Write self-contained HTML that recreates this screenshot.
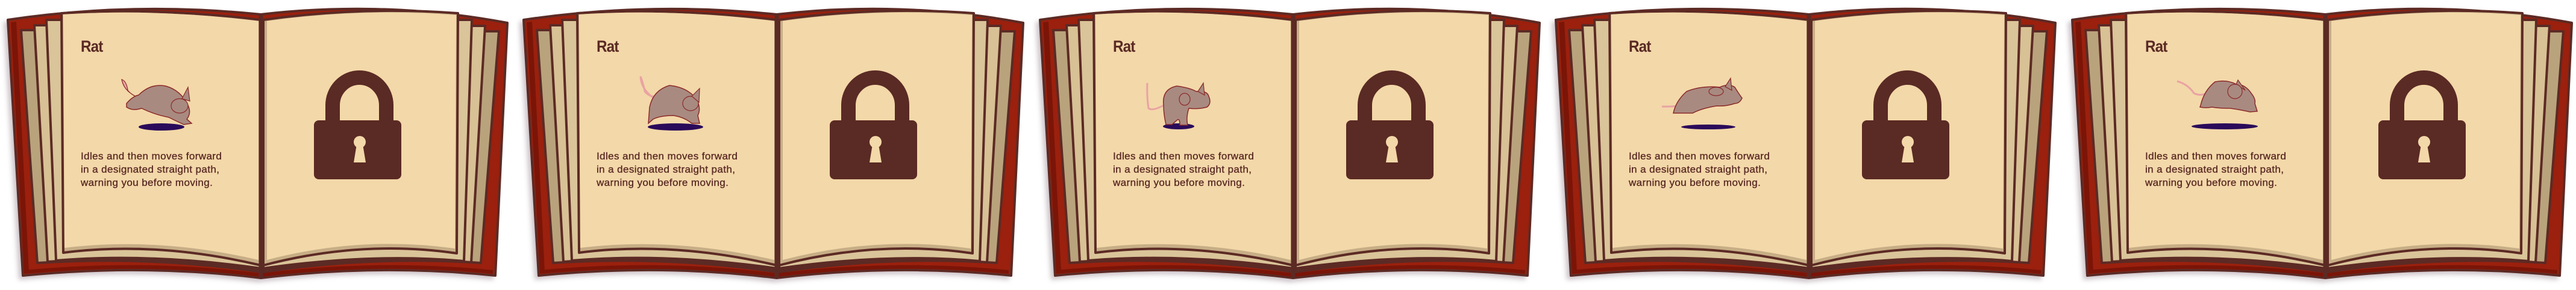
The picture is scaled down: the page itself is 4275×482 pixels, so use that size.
<!DOCTYPE html>
<html><head><meta charset="utf-8">
<style>
html,body{margin:0;padding:0;background:#fff;}
body{width:4275px;height:482px;position:relative;overflow:hidden;}
.p{position:absolute;top:0;width:856px;height:482px;}
.p svg{position:absolute;left:0;top:0;}
.t{position:absolute;left:134px;top:62px;font:bold 27px "Liberation Sans",sans-serif;color:#5a2a24;letter-spacing:-1px;transform:scaleX(0.9);transform-origin:left;}
.d{position:absolute;left:134px;top:249px;font:17px/22px "Liberation Sans",sans-serif;color:#5a2a24;letter-spacing:0.4px;white-space:nowrap;-webkit-text-stroke:0.35px #5a2a24;}
</style></head><body>

<svg width="0" height="0" style="position:absolute">
<defs>
<g id="book">
 <g style="filter:drop-shadow(-5px 5px 4px rgba(90,60,75,.3))">
  <path d="M13,33 Q220,2 433,24 L433,462 Q240,438 38,458 Z" fill="#9b200d" stroke="#5c2a24" stroke-width="4" stroke-linejoin="round"/>
  <path d="M433,24 Q640,0 842,38 L822,458 Q630,438 433,462 Z" fill="#9b200d" stroke="#5c2a24" stroke-width="4" stroke-linejoin="round"/>
 </g>
 <polygon points="18,37 27,36 48,452 40,454" fill="#7a1508"/>
 <path d="M40,452 Q240,433 431,457" fill="none" stroke="#7a1508" stroke-width="6"/>
 <path d="M435,457 Q630,433 818,452" fill="none" stroke="#7a1508" stroke-width="6"/>
 <g stroke="#5c2a24" stroke-width="4" stroke-linejoin="round">
  <path d="M35,50 L433,50 L433,452 Q250,425 62,437 Z" fill="#b9a37c"/>
  <path d="M57,42 L433,42 L433,448 Q250,423 79,435 Z" fill="#d8c195"/>
  <path d="M77,33 L433,33 L433,446 Q250,420 93,433 Z" fill="#dac499"/>
  <path d="M828,52 L437,52 L437,452 Q620,425 798,437 Z" fill="#b9a37c"/>
  <path d="M805,43 L437,43 L437,448 Q620,423 782,436 Z" fill="#d8c195"/>
  <path d="M783,33 L437,33 L437,446 Q620,420 770,434 Z" fill="#dac499"/>
  <path d="M102,22 Q260,12 433,33 L433,441 Q260,400 105,420 Z" fill="#c7ae86"/>
  <path d="M437,33 Q600,10 760,22 L758,421 Q600,398 437,441 Z" fill="#c7ae86"/>
 </g>
 <path d="M105,24 Q260,14 429,35 L429,432 Q260,393 107,412 Z" fill="#f3d8a9"/>
 <path d="M443,35 Q600,13 757,25 L755,413 Q600,391 443,432 Z" fill="#f3d8a9"/>
 <path d="M433,24 L433,462" stroke="#5c2a24" stroke-width="7"/>
 <path d="M552,208 V175 A44.5,46 0 0 1 641,175 V208" fill="none" stroke="#5a2a24" stroke-width="24"/>
 <rect x="521" y="200" width="145" height="98" rx="8" fill="#5a2a24"/>
 <circle cx="597" cy="236" r="10" fill="#f3d8a9"/>
 <path d="M592,240 L587,270 L607,270 L602,240 Z" fill="#f3d8a9"/>
</g>
</defs>
</svg>

<div class="p" style="left:0px">
<svg width="856" height="482"><use href="#book"/>
 <ellipse cx="268" cy="211" rx="38" ry="6" fill="#2a0a5a"/>
 <path d="M225,160 Q205,150 202,132 Q210,135 212,150 Q220,160 232,162" fill="#e9a3a3" stroke="#8a2a2a" stroke-width="1.2"/>
 <path d="M210,172 Q220,160 230,158 Q250,138 275,143 Q300,150 312,175 Q318,188 310,198 L318,205 L305,207 Q290,200 280,195 Q255,190 235,180 Q220,185 210,178 Z" fill="#a98a80" stroke="#8a2a2a" stroke-width="1.5"/>
 <ellipse cx="298" cy="176" rx="14" ry="12" fill="#a98a80" stroke="#8a2a2a" stroke-width="1.2"/>
 <path d="M302,164 L312,145 L315,168 Z" fill="#a98a80" stroke="#8a2a2a" stroke-width="1.2"/>
</svg>
<div class="t">Rat</div>
<div class="d">Idles and then moves forward<br>in a designated straight path,<br>warning you before moving.</div>
</div>

<div class="p" style="left:856px">
<svg width="856" height="482"><use href="#book"/>
 <ellipse cx="265" cy="211" rx="46" ry="6" fill="#2a0a5a"/>
 <path d="M232,165 Q208,150 207,127 Q212,140 214,152 Q222,162 234,160" fill="none" stroke="#e9a3a3" stroke-width="3"/>
 <path d="M222,178 Q228,150 255,142 Q285,145 300,165 Q308,180 302,192 L305,205 L292,205 Q280,195 262,192 Q240,192 228,198 L220,205 Z" fill="#a98a80" stroke="#8a2a2a" stroke-width="1.5"/>
 <ellipse cx="290" cy="172" rx="13" ry="12" fill="#a98a80" stroke="#8a2a2a" stroke-width="1.2"/>
 <path d="M292,160 L305,147 L304,170 Z" fill="#a98a80" stroke="#8a2a2a" stroke-width="1.2"/>
</svg>
<div class="t">Rat</div>
<div class="d">Idles and then moves forward<br>in a designated straight path,<br>warning you before moving.</div>
</div>

<div class="p" style="left:1713px">
<svg width="856" height="482"><use href="#book"/>
 <ellipse cx="243" cy="210" rx="26" ry="5" fill="#2a0a5a"/>
 <path d="M218,175 Q200,185 193,180 Q190,160 191,138" fill="none" stroke="#e9a3a3" stroke-width="3"/>
 <path d="M218,175 Q215,148 240,143 Q262,146 272,152 Q290,150 293,160 Q298,172 290,178 Q275,182 260,180 Q255,195 258,208 L245,208 Q245,195 240,200 L232,207 L222,207 Q218,190 218,175 Z" fill="#a98a80" stroke="#8a2a2a" stroke-width="1.5"/>
 <path d="M275,152 L284,138 L286,158 Z" fill="#a98a80" stroke="#8a2a2a" stroke-width="1.2"/>
 <ellipse cx="253" cy="165" rx="9" ry="10" fill="#a98a80" stroke="#8a2a2a" stroke-width="1.2"/>
</svg>
<div class="t">Rat</div>
<div class="d">Idles and then moves forward<br>in a designated straight path,<br>warning you before moving.</div>
</div>

<div class="p" style="left:2569px">
<svg width="856" height="482"><use href="#book"/>
 <ellipse cx="266" cy="211" rx="45" ry="4" fill="#2a0a5a"/>
 <path d="M189,177 Q215,178 232,172" fill="none" stroke="#e9a3a3" stroke-width="3"/>
 <path d="M208,188 Q212,168 230,152 Q255,142 285,145 Q300,138 310,145 Q318,158 322,163 Q318,172 310,172 Q295,177 280,176 Q255,180 240,188 Z" fill="#a98a80" stroke="#8a2a2a" stroke-width="1.5"/>
 <path d="M294,144 L303,130 L305,150 Z" fill="#a98a80" stroke="#8a2a2a" stroke-width="1.2"/>
 <ellipse cx="279" cy="152" rx="12" ry="7" fill="#a98a80" stroke="#8a2a2a" stroke-width="1.2"/>
</svg>
<div class="t">Rat</div>
<div class="d">Idles and then moves forward<br>in a designated straight path,<br>warning you before moving.</div>
</div>

<div class="p" style="left:3426px">
<svg width="856" height="482"><use href="#book"/>
 <ellipse cx="266" cy="210" rx="55" ry="5" fill="#2a0a5a"/>
 <path d="M187,135 Q205,140 215,155 Q225,160 236,155" fill="none" stroke="#e9a3a3" stroke-width="3"/>
 <path d="M226,175 Q232,150 250,136 Q270,132 285,140 Q300,140 310,155 Q318,165 316,172 L320,185 L308,186 Q290,182 275,180 Q255,180 245,178 Q235,180 225,178 Z" fill="#a98a80" stroke="#8a2a2a" stroke-width="1.5"/>
 <path d="M285,140 L288,133 L300,150 Z" fill="#a98a80" stroke="#8a2a2a" stroke-width="1.2"/>
 <ellipse cx="283" cy="152" rx="12" ry="12" fill="#a98a80" stroke="#8a2a2a" stroke-width="1.2"/>
</svg>
<div class="t">Rat</div>
<div class="d">Idles and then moves forward<br>in a designated straight path,<br>warning you before moving.</div>
</div>

</body></html>
